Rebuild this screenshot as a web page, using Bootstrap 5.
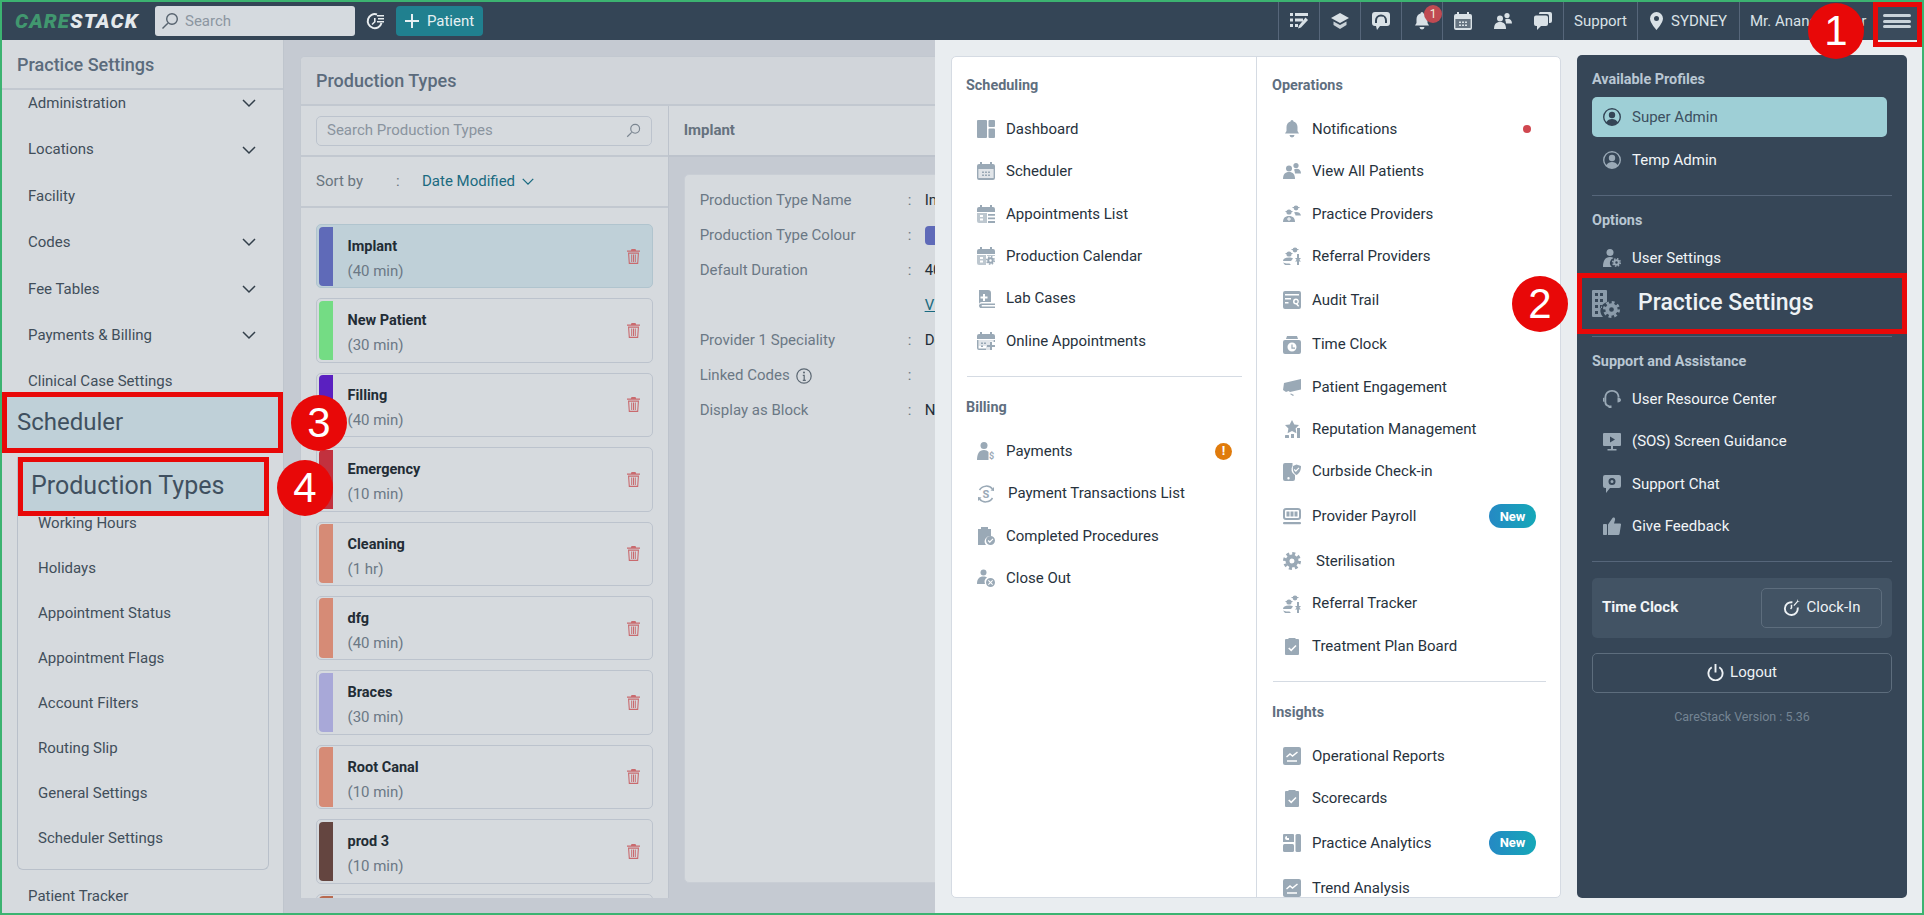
<!DOCTYPE html>
<html lang="en">
<head>
  <meta charset="UTF-8" />
  <meta name="viewport" content="width=device-width, initial-scale=1.0"/>
  <title>Practice Settings - Production Types</title>
  <link href="https://cdn.jsdelivr.net/npm/bootstrap@5.3.0/dist/css/bootstrap.min.css" rel="stylesheet"/>
  <style>
    body { margin: 0; font-family: Roboto, "Liberation Sans", sans-serif; overflow: hidden; background: #e9edf0; }
    svg { fill: currentColor; flex-shrink: 0; }
    #app { width: 1924px; height: 915px; border: 2px solid #3cb371; position: relative; overflow: hidden; background: #c5cad2; }

    /* top bar */
    .topbar { height: 38px; background: #344556; color: #d9e1e6; }
    .brand { width: 140px; margin-left: 13px; font-size: 20.5px; font-weight: 900; font-style: italic; letter-spacing: 1.1px; color: #e4e9ec; white-space: nowrap; }
    .brand b { color: #41976f; font-weight: 900; }
    .top-search { width: 200px; height: 30px; background: #d5dadf; border-radius: 3px; color: #8c96a1; font-size: 15px; padding-left: 6px; }
    .top-search svg { width: 18px; height: 18px; margin-right: 6px; color: #56626e; }
    .top-clock { width: 18px; height: 18px; margin: 0 12px 0 11px; color: #e8edf0; }
    .btn-patient { width: 87px; height: 30px; background: #20808f; color: #e6f0f2; border-radius: 4px; font-size: 15px; border: 0; padding: 0; }
    .top-cell { height: 38px; border-left: 1px solid #56667a; font-size: 15px; white-space: nowrap; }
    .top-ico { width: 41px; }
    .top-plain { width: 40.33px; }
    .top-ico svg, .top-plain svg { width: 18px; height: 18px; }
    .top-support { width: 74px; }
    .top-loc { width: 102px; }
    .top-loc svg { width: 13px; height: 18px; margin-right: 8px; }
    .top-name { width: 134px; padding-left: 10px; }
    .burger { width: 48px; height: 38px; margin-right: 1px; background: #3a4b5c; border: 0; padding: 0; }
    .burger i { display: block; width: 28px; height: 3px; margin: 2.5px auto; border-radius: 2px; background: #c9d3da; }
    .bell-count { position: absolute; top: 3px; left: 22px; width: 18px; height: 18px; border-radius: 50%; background: #c04a52; color: #eed; font-size: 12px; line-height: 18px; text-align: center; }

    /* left settings nav */
    .side { width: 282px; height: 873px; background: #d6dade; border-right: 1px solid #bfc5cd; overflow: hidden; }
    .side-title { height: 50px; padding-left: 15px; border-bottom: 2px solid #c2c8d0; font-size: 18px; font-weight: 500; color: #5b6b7c; }
    .side-scroll { margin-top: -10px; color: #414e5a; font-size: 15px; }
    .side-row { height: 46.4px; padding: 0 26px 0 26px; }
    .side-row svg { width: 16px; height: 10px; fill: none; stroke: #333f4a; stroke-width: 1.5; }
    .side-open { position: relative; margin-top: -13px; height: 61px; padding-left: 10px; border: 5px solid #e80808; background: #bfd0d8; font-size: 24px; color: #3f5060; }
    .side-sub { position: relative; margin: 4px 14px 0 15px; padding-bottom: 8px; border: 1px solid #b9c0ca; border-top: 0; border-radius: 0 0 6px 6px; }
    .sub-active { position: relative; z-index: 1; height: 59px; margin: 0 -1px 0 0; padding-left: 8px; border: 5px solid #e80808; background: #bfd0d8; font-size: 25px; color: #3f5060; }
    .sub-row { height: 45px; padding-left: 20px; }
    .sub-first { margin-top: -15px; padding-top: 0; }
    .side-last { margin-top: 3px; }

    /* production types card */
    .prod-card { position: relative; width: 1000px; margin: 16px 0 0 16px; height: 842px; background: #d6dade; border: 1px solid #c2c8d0; border-bottom: 0; border-radius: 5px 5px 0 0; overflow: hidden; }
    .prod-head { height: 49px; padding-left: 15px; background: #d1d5da; border-bottom: 2px solid #c2c8d0; font-size: 18px; font-weight: 500; color: #5b6b7c; }
    .prod-left { width: 368px; border-right: 1px solid #bdc3cc; }
    .prod-search { height: 51px; padding: 0 15px; border-bottom: 2px solid #c2c8d0; }
    .prod-input { height: 30px; width: 336px; border: 1px solid #bcc3cd; border-radius: 5px; padding: 0 10px; color: #8a949f; font-size: 15px; }
    .prod-input svg { width: 15px; height: 15px; color: #7a8590; }
    .prod-sort { height: 51px; padding-left: 15px; border-bottom: 2px solid #c2c8d0; color: #69757f; font-size: 15px; }
    .sort-colon { width: 26px; padding-left: 33px; margin-right: 26px; }
    .sort-val { color: #1a6a80; }
    .sort-val svg { width: 14px; height: 9px; margin-left: 6px; fill: none; stroke: #1a6a80; stroke-width: 1.5; }
    .type-list { padding: 16px 15px 0; }
    .type-item { height: 64.4px; margin-bottom: 10px; border: 1.5px solid #bcc3cd; border-radius: 5px; overflow: hidden; }
    .type-item.is-on { background: #bfd0d8; border-color: #b0c4ce; }
    .type-bar { width: 14px; margin: 1.5px 0 1.5px 1.5px; border-radius: 4px 0 0 4px; }
    .type-body { padding: 9px 0 0 15px; line-height: 25px; }
    .type-name { font-size: 14.5px; font-weight: 700; color: #222c35; }
    .type-time { font-size: 15px; color: #6b7885; }
    .type-trash { width: 13px; height: 15px; margin: 0 12px 0 auto; color: #c96a6e; }
    .bar-implant { background: #5f6ab8; }
    .bar-new { background: #74dc84; }
    .bar-fill { background: #5a20c0; }
    .bar-emerg { background: #c2313e; }
    .bar-salmon { background: #d68b76; }
    .bar-brace { background: #a8a8d8; }
    .bar-prod { background: #644540; }
    .bar-last { background: #b86a50; }
    .detail-pane { width: 631px; background: #c5cad2; }
    .detail-head { height: 51px; padding-left: 15px; background: #d6dade; border-bottom: 2px solid #bdc3cc; font-size: 15px; font-weight: 700; color: #66727e; }
    .detail-box { height: 709px; margin: 17px 0 0 15px; padding: 8px 15px; background: #d6dade; border-radius: 5px 0 0 5px; border: 1px solid #c9ced5; font-size: 15px; }
    .detail-row { height: 35px; }
    .detail-label { width: 208px; color: #6b7885; }
    .detail-colon { width: 17px; color: #6b7885; }
    .detail-val { color: #232e38; }
    .detail-val a { color: #1a6a80; }
    .info-ico { width: 16px; height: 16px; margin-left: 6px; color: #5c6873; }
    .swatch { width: 50px; height: 19px; border-radius: 4px; background: #5f6ab8; }

    /* slide-in menu */
    .drawer { position: absolute; top: 38px; left: 933px; right: 0; bottom: 0; padding: 16px 15px 15px 16px; gap: 16px; background: #e9edf0; z-index: 5; }
    .menu-white { width: 610px; height: 842px; background: #fff; border: 1px solid #d5dbe3; border-radius: 5px; overflow: hidden; color: #27323d; }
    .menu-col { width: 304px; padding: 19px 14px 0; }
    .menu-col + .menu-col { width: 304px; border-left: 1px solid #d5dbe3; padding-left: 15px; }
    .menu-title { height: 20px; line-height: 20px; font-size: 14.4px; font-weight: 700; color: #5f6f7f; }
    .menu-list { margin-top: 11.8px; }
    .menu-row { height: 42.4px; padding-left: 11px; font-size: 15px; white-space: nowrap; color: inherit; }
    .menu-row.is-tall { height: 47px; }
    .menu-row.is-mid { height: 46px; }
    .menu-ico { width: 18px; height: 18px; margin-right: 11px; color: #9aa9b6; }
    .menu-ico.nudge { margin-right: 13px; }
    .menu-rule { height: 1px; margin: 14px 0 21px; background: #d5dbe3; }
    .menu-white .menu-rule { margin-left: 1px; }
    .tag-new { width: 47px; height: 24px; margin-left: auto; margin-right: 10px; border-radius: 12px; background: linear-gradient(90deg, #2589c4, #15a8b8); color: #fff; font-size: 13px; font-weight: 700; }
    .dot-red { width: 8px; height: 8px; margin-left: auto; margin-right: 15px; border-radius: 50%; background: #d0474f; }
    .dot-warn { width: 17px; height: 17px; margin-left: auto; margin-right: 10px; border-radius: 50%; background: #e07b0c; color: #fff; font-size: 13px; font-weight: 700; }

    .menu-dark { width: 330px; height: 843px; margin-top: -1px; padding: 15px 15px 0; background: #364657; border-radius: 5px; color: #f2f5f7; overflow: hidden; }
    .menu-dark .menu-title { color: #b9c7d3; }
    .menu-dark .menu-rule { margin: 0; background: #56667a; }
    .profile-row { height: 40px; margin-top: 7px; padding-left: 11px; font-size: 15px; }
    .profile-row.is-on { width: 295px; background: #9ecfd6; border-radius: 5px; color: #3c4f60; }
    .profile-row.is-on .menu-ico { color: #344556; }
    .profile-temp { margin-top: 3px; }
    .rule-a { margin-top: 15px !important; }
    .title-gap { margin-top: 15px; }
    .opts-row { height: 40px; margin-top: 7px; padding-left: 11px; font-size: 15px; }
    .big-row { height: 61px; margin: -5px -15px 0; padding-left: 15px; border: 5px solid #e80808; background: #364657; font-size: 23px; font-weight: 500; color: #eef2f5; }
    .big-row svg { width: 28px; height: 28px; margin-right: 18px; margin-left: -5px; color: #8b9baa; }
    .rule-b { margin-top: 2px !important; }
    .support-list { margin-top: 6px; }
    .rule-c { margin-top: 13.5px !important; }
    .clock-box { height: 60px; margin-top: 15.5px; padding: 0 10px; background: #425364; border-radius: 5px; font-size: 15px; font-weight: 700; }
    .btn-clock, .btn-logout { height: 40px; padding: 0; background: transparent; border: 1px solid #5d6d7d; border-radius: 5px; color: #eef2f5; font-size: 15px; }
    .btn-clock { width: 121px; font-weight: 400; }
    .btn-clock svg { width: 17px; height: 17px; margin-right: 7px; }
    .btn-logout { width: 300px; margin-top: 15px; }
    .btn-logout svg { width: 17px; height: 17px; margin-right: 6px; }
    .version { margin-top: 16px; width: 300px; font-size: 12.5px; line-height: 16px; color: #748493; text-align: center; }

    /* numbered callouts pasted on the shot */
    .callout { position: absolute; z-index: 20; width: 56px; height: 56px; border-radius: 50%; background: #e80808; color: #fff; font-family: "Liberation Sans", sans-serif; font-size: 42px; line-height: 56px; text-align: center; }
    .callout-1 { left: 1806px; top: 1px; }
    .callout-2 { left: 1510px; top: 274px; }
    .callout-3 { left: 289px; top: 393px; }
    .callout-4 { left: 275px; top: 458px; }
    .burger-box { position: absolute; z-index: 19; left: 1871px; top: 0; width: 49px; height: 45px; border: 5px solid #e80808; }
  </style>
</head>
<body>
  <!-- icon set -->
  <svg width="0" height="0" class="position-absolute">
    <symbol id="i-gear" viewBox="0 0 18 18"><circle cx="9" cy="9" r="7.5" fill="none" stroke="currentColor" stroke-width="3" stroke-dasharray="3 2.89"/><path fill-rule="evenodd" d="M9 2.5a6.5 6.5 0 1 1 0 13 6.5 6.5 0 0 1 0-13zm0 4a2.5 2.5 0 1 0 0 5 2.5 2.5 0 0 0 0-5z"/></symbol>
    <symbol id="i-search" viewBox="0 0 18 18"><path fill-rule="evenodd" d="M11 1a6 6 0 1 1 0 12 6 6 0 0 1 0-12zm0 1.4a4.6 4.6 0 1 0 0 9.2 4.6 4.6 0 0 0 0-9.2z"/><path d="M6.3 10.7l1 1-5.3 5.3-1-1z"/></symbol>
    <symbol id="i-chev" viewBox="0 0 16 10"><path d="M2 2l6 6 6-6"/></symbol>
    <symbol id="i-trash" viewBox="0 0 13 15"><path fill-rule="evenodd" d="M4.5 0h4l.6 1.5H13v1.2H0V1.5h3.9zM1 3.6h11l-.8 11.4H1.800zm1.200 1.100l.6 9.100h7.400l.6-9.100z"/><path d="M4.200 5.500h1v7.500h-1zm1.800 0h1v7.500H6zm1.800 0h1v7.500h-1z"/></symbol>
    <symbol id="i-dash" viewBox="0 0 18 18"><rect width="10" height="18" rx="1"/><rect x="11.500" width="6.500" height="7" rx="1"/><rect x="11.500" y="8.500" width="6.500" height="9.500" rx="1"/></symbol>
    <symbol id="i-cal" viewBox="0 0 18 18"><path fill-rule="evenodd" d="M3 0h2v2h8V0h2v2h1a2 2 0 0 1 2 2v12a2 2 0 0 1-2 2H2a2 2 0 0 1-2-2V4a2 2 0 0 1 2-2h1zM1.500 7v9h15V7z"/><rect x="1.500" y="7" width="15" height="9" opacity=".3"/><path d="M5 9.500h2V11H5zm3 0h2V11H8zm3 0h2V11h-2zM5 12.500h2V14H5zm3 0h2V14H8zm3 0h2V14h-2z"/></symbol>
    <symbol id="i-callist" viewBox="0 0 18 18"><path fill-rule="evenodd" d="M3 0h2v2h8V0h2v2h1a2 2 0 0 1 2 2v3H0V4a2 2 0 0 1 2-2h1z"/><path d="M0 8h10v10H2a2 2 0 0 1-2-2z" opacity=".65"/><path d="M11 9h7v1.700h-7zm0 3.500h7v1.700h-7zm0 3.500h7V18h-7z"/><path fill="#fff" d="M3 10h3v2H3zm0 3.500h3v2H3z"/></symbol>
    <symbol id="i-calgear" viewBox="0 0 18 18"><path d="M3 0h2v2h8V0h2v2h1a2 2 0 0 1 2 2v3H0V4a2 2 0 0 1 2-2h1z"/><path d="M0 8h9v10H2a2 2 0 0 1-2-2z" opacity=".65"/><path d="M10 8h8v1h-8z" opacity=".65"/><path fill="#fff" d="M3 10h3v2H3zm0 3.500h3v2H3z"/><use href="#i-gear" x="9" y="9" width="9" height="9"/></symbol>
    <symbol id="i-calplus" viewBox="0 0 18 18"><path d="M3 0h2v2h8V0h2v2h1a2 2 0 0 1 2 2v3H0V4a2 2 0 0 1 2-2h1z"/><path d="M0 8h1.500v8.500H9V18H2a2 2 0 0 1-2-2zM16.500 8H18v2h-1.500z"/><path d="M1.500 8H16v1.500h-3V18H9v-4H1.500z" opacity=".3"/><path d="M13 10h2v3h3v2h-3v3h-2v-3h-3v-2h3z"/><path d="M4 10.500h2V12H4zm3 0h2V12H7zm-3 3h2V15H4z"/></symbol>
    <symbol id="i-lab" viewBox="0 0 18 18"><path fill-rule="evenodd" d="M2 0h9a3 3 0 0 1 3 3v9H5a3 3 0 0 0-3 3zm4 4v2.500H3.500v2H6V11h2V8.500h2.500v-2H8V4z"/><path d="M5 13.500h13V15H5a1 1 0 0 0 0 1.500h13V18H5a2.300 2.300 0 0 1-3-2.200A2.400 2.400 0 0 1 5 13.500z"/></symbol>
    <symbol id="i-pay" viewBox="0 0 18 18"><circle cx="7" cy="3.500" r="3.500"/><path d="M0 18c0-6 2-10 7-10 2 0 3.500.7 4.500 2v8z"/><text x="12" y="17" font-family="Roboto, sans-serif" font-size="9" font-weight="700">$</text></symbol>
    <symbol id="i-trans" viewBox="0 0 18 18"><path fill="none" stroke="currentColor" stroke-width="1.500" d="M2.500 5A8 8 0 0 1 15.500 4M15.500 13A8 8 0 0 1 2.500 14"/><path d="M13.500 5.500L17 6V2zM4.500 12.500L1 12v4z"/><text x="9" y="13" text-anchor="middle" font-family="Roboto, sans-serif" font-size="11" font-weight="700">S</text></symbol>
    <symbol id="i-proc" viewBox="0 0 18 18"><path fill-rule="evenodd" d="M1 2h3V0h7v2h3v7a5.500 5.500 0 0 0-5 9H1z"/><path fill-rule="evenodd" d="M13.500 9a4.500 4.500 0 1 1 0 9 4.500 4.500 0 0 1 0-9zm2.100 2.500l-2.800 2.800-1.300-1.200-.8.800 2.100 2 3.600-3.600z"/></symbol>
    <symbol id="i-close" viewBox="0 0 18 18"><circle cx="6.500" cy="3.500" r="3"/><path d="M0 15c0-5 2-7.500 6.500-7.500 1.500 0 2.500.3 3.500 1A5.500 5.500 0 0 0 8 15z"/><path fill-rule="evenodd" d="M13.500 9a4.500 4.500 0 1 1 0 9 4.500 4.500 0 0 1 0-9zm-1.800 2l-.7.700 1.800 1.800-1.800 1.800.7.700 1.800-1.800 1.800 1.800.7-.7-1.800-1.800 1.800-1.800-.7-.7-1.800 1.800z"/></symbol>
    <symbol id="i-bell" viewBox="0 0 18 18"><path d="M9 0a1.500 1.500 0 0 1 1.500 1.500C13 2.200 14.500 4.500 14.500 7v4l1.500 2.500H2L3.500 11V7c0-2.500 1.500-4.800 4-5.500A1.500 1.500 0 0 1 9 0z"/><path d="M6.500 15h5a2.500 2.500 0 0 1-5 0z"/></symbol>
    <symbol id="i-people" viewBox="0 0 18 18"><circle cx="13" cy="3.500" r="2.600"/><circle cx="6" cy="6.500" r="3"/><path d="M11 7.500c1-.7 1.500-.8 2.500-.8 2.800 0 4.500 1.800 4.500 4.800h-6c-.2-1.500-.4-2.900-1-4z"/><path d="M0 17c0-4.500 2-7 6-7s6 2.500 6 7z"/></symbol>
    <symbol id="i-prov" viewBox="0 0 18 18"><circle cx="13" cy="3" r="2.400"/><path d="M9.500 2h7v1h-7z"/><circle cx="6" cy="7" r="2.600"/><path d="M2.500 6h7v1h-7z"/><path d="M13 7c2.500 0 4.500 1 5 3.500h-5.500c0-1-.5-2-1.500-3 .4-.3 1.200-.5 2-.5z"/><path fill-rule="evenodd" d="M0 17c0-3.800 2-6 6-6s6 2.200 6 6zm4-3.500v1h1.500V16h1v-1.500H8v-1H6.500V12h-1v1.500z"/></symbol>
    <symbol id="i-refer" viewBox="0 0 18 18"><circle cx="12" cy="3" r="2.400"/><path d="M8.500 2h7v1h-7z"/><circle cx="6" cy="7" r="2.600"/><path d="M2.500 6h7v1h-7z"/><path d="M0 14c0-2 2-3.500 6-3.500 1.500 0 3 .3 4 1l-2 2.500zM0 15.500c2 1 4.500 1 6.500 1L8 18H2z"/><path d="M14 7h2v4h2l-3 3.500-3-3.500h2zM15 11.500l3 3h-2v3.500h-2v-3.500h-2z"/></symbol>
    <symbol id="i-audit" viewBox="0 0 18 18"><path fill-rule="evenodd" d="M2 0h14a2 2 0 0 1 2 2v14a2 2 0 0 1-2 2H2a2 2 0 0 1-2-2V2a2 2 0 0 1 2-2zm0 3v1.500h14V3zm0 4v1.500h6V7zm0 4v1.500h3.500V11zm11-3.500a3 3 0 1 0 0 6l2.200 2.300 1-1-1.500-1.900A3 3 0 0 0 13 7.500zm0 1.500a1.500 1.500 0 1 1 0 3 1.500 1.500 0 0 1 0-3z"/></symbol>
    <symbol id="i-tclock" viewBox="0 0 18 18"><path d="M4 0h10l1 3H3z"/><path fill-rule="evenodd" d="M2 4h14a2 2 0 0 1 2 2v10a2 2 0 0 1-2 2H2a2 2 0 0 1-2-2V6a2 2 0 0 1 2-2zm7 2.500a4.500 4.500 0 1 0 0 9 4.500 4.500 0 0 0 0-9zm-.6 2h1.200v3h2.400v1.200H8.400z"/></symbol>
    <symbol id="i-mega" viewBox="0 0 18 18"><path d="M18 1v10.500L7 14l-1.500-1L3 14l-3-2 1-7zM8 15.500l3 1.500-1 1-3-2z"/></symbol>
    <symbol id="i-rep" viewBox="0 0 18 18"><path d="M9 0l2.300 4.400 4.700.7-3.400 3.300.8 4.800L9 11l-4.400 2.200.8-4.800L2 5.100l4.700-.7z"/><rect x="2" y="15" width="4" height="3" rx=".6"/><rect x="8" y="14" width="3" height="4"/><rect x="14" y="8" width="3" height="10"/></symbol>
    <symbol id="i-curb" viewBox="0 0 18 18"><path fill-rule="evenodd" d="M2 0h7.500v3A6 6 0 0 0 12 12v4a2 2 0 0 1-2 2H2a2 2 0 0 1-2-2V2a2 2 0 0 1 2-2zm3.500 14a1.200 1.200 0 1 0 0 2.400 1.200 1.200 0 0 0 0-2.400z"/><path fill-rule="evenodd" d="M13.500 1.500L18 3c0 4-1 7-4.500 9C10 10 9.500 7 10 3zm2.100 3l-2.800 2.800-1.200-1.200-.8.800 2 2 3.600-3.600z"/></symbol>
    <symbol id="i-payroll" viewBox="0 0 18 18"><path fill-rule="evenodd" d="M3 1h12a3 3 0 0 1 3 3v6a3 3 0 0 1-3 3H3a3 3 0 0 1-3-3V4a3 3 0 0 1 3-3zm0 2a1 1 0 0 0-1 1v6a1 1 0 0 0 1 1h12a1 1 0 0 0 1-1V4a1 1 0 0 0-1-1z"/><rect x="3.500" y="4.500" width="3" height="5"/><rect x="7.500" y="4.500" width="3" height="5"/><rect x="11.500" y="4.500" width="3" height="5"/><rect y="15" width="18" height="2.200" rx="1"/></symbol>
    <symbol id="i-clip" viewBox="0 0 18 18"><path fill-rule="evenodd" d="M3 2h2.500V1h7v1H15a1 1 0 0 1 1 1v14a1 1 0 0 1-1 1H3a1 1 0 0 1-1-1V3a1 1 0 0 1 1-1zm9.500 6l-4.300 4.300-2-1.900-1 1 3 3 5.300-5.300z"/></symbol>
    <symbol id="i-chart" viewBox="0 0 18 18"><rect width="18" height="18" rx="2"/><path fill="none" stroke="#fff" stroke-width="1.500" d="M3.500 10l3.500-3 2.500 2 5-4M4 14h10"/></symbol>
    <symbol id="i-analytics" viewBox="0 0 18 18"><path fill-rule="evenodd" d="M1 0h9a1 1 0 0 1 1 1v7H0V1a1 1 0 0 1 1-1zm3 2a2 2 0 0 0 0 4h2V4H4z"/><rect y="10" width="11" height="8" rx="1.500"/><rect x="12.500" width="5.500" height="18" rx="1.500"/></symbol>
    <symbol id="i-profile" viewBox="0 0 18 18"><path fill-rule="evenodd" d="M9 0a9 9 0 1 1 0 18A9 9 0 0 1 9 0zm0 1.500a7.500 7.500 0 0 0-5.500 12.600C4.500 12 6.500 11 9 11s4.500 1 5.500 3.100A7.500 7.500 0 0 0 9 1.500z"/><circle cx="9" cy="7" r="3.200"/></symbol>
    <symbol id="i-usergear" viewBox="0 0 18 18"><circle cx="7" cy="3.500" r="3.500"/><path d="M0 18c0-6 2-10 7-10 1.500 0 2.700.4 3.600 1.100A5 5 0 0 0 9 18z"/><use href="#i-gear" x="9" y="9" width="9" height="9"/></symbol>
    <symbol id="i-build" viewBox="0 0 28 28"><path fill-rule="evenodd" d="M1 0h13a1 1 0 0 1 1 1v11a9 9 0 0 0-4 15H1a1 1 0 0 1-1-1V1a1 1 0 0 1 1-1zm2 3v3h3V3zm5 0v3h3V3zM3 9v3h3V9zm5 0v3h3V9zM3 15v3h3v-3zm5 0v3h2v-3zM3 21v3h3v-3z"/><use href="#i-gear" x="11" y="11" width="17" height="17"/></symbol>
    <symbol id="i-head" viewBox="0 0 18 18"><path d="M9 0c4.400 0 7.500 3 7.500 7.500h-1.800C14.700 4 12.400 1.800 9 1.800S3.300 4 3.300 7.500V12c0 1.500.9 2.800 2.700 3.200v1.800c-3.500-.4-4.500-2.700-4.500-5V7.500C1.500 3 4.600 0 9 0z"/><path d="M0 8l1.500-.5V12L0 11.500zM14.500 7.500c2 0 3.500 1 3.500 2.500s-1.500 2.500-3.500 2.500zM5.500 15.500h3V18h-3z"/></symbol>
    <symbol id="i-screen" viewBox="0 0 18 18"><path fill-rule="evenodd" d="M1 0h16a1 1 0 0 1 1 1v11a1 1 0 0 1-1 1H1a1 1 0 0 1-1-1V1a1 1 0 0 1 1-1zm6 3.500v6l5-3z"/><path d="M8 13h2v3H8zM4.500 16h9v1.500h-9z"/></symbol>
    <symbol id="i-schat" viewBox="0 0 18 18"><path fill-rule="evenodd" d="M2 0h14a2 2 0 0 1 2 2v9a2 2 0 0 1-2 2H7l-4 5v-5H2a2 2 0 0 1-2-2V2a2 2 0 0 1 2-2zm7 3a3.500 3.500 0 1 0 0 7 3.500 3.500 0 0 0 0-7zm0 2a1.500 1.500 0 1 1 0 3 1.500 1.500 0 0 1 0-3z"/></symbol>
    <symbol id="i-thumb" viewBox="0 0 18 18"><rect y="7" width="4" height="11" rx=".8"/><path d="M5 7.500L9.500 1c1.500-1 3 0 2.500 2L11 6.500h6a1 1 0 0 1 1 1.200L16.500 17a1.300 1.300 0 0 1-1.300 1H5z"/></symbol>
    <symbol id="i-clockin" viewBox="0 0 18 18"><path fill="none" stroke="currentColor" stroke-width="2" d="M10 3.500A6.800 6.800 0 1 0 15.500 9"/><path d="M8.200 6h1.600v3.500L8.500 11l-1-1 .7-.9z"/><path d="M11 6.500L15 2l.5-2 .5 2 2 .5-2 .5-4 4.500z"/></symbol>
    <symbol id="i-power" viewBox="0 0 18 18"><path d="M8 0h2v9H8z"/><path fill="none" stroke="currentColor" stroke-width="2" d="M5 3.500a7.500 7.500 0 1 0 8 0"/></symbol>
    <symbol id="i-info" viewBox="0 0 16 16"><circle cx="8" cy="8" r="7.200" fill="none" stroke="currentColor" stroke-width="1.200"/><circle cx="8" cy="4.600" r="1"/><path d="M6.800 6.800h2v5h1V13H6.800v-1.200h.8V8H6.800z"/></symbol>
    <symbol id="i-tasks" viewBox="0 0 18 18"><path d="M0 1h3v3H0zm5 0h13v3H5zM0 6.500h3v3H0zm5 0h8v3H5zM0 12h3v3H0zm5 0h3v3H5z"/><path d="M15.500 5.500L18 8l-7 7.500-3 1 1-3z"/></symbol>
    <symbol id="i-cap" viewBox="0 0 18 18"><path d="M9 1l9 5-9 5-9-5z"/><path d="M2.500 9.500L9 13l6.500-3.500V13L9 17l-6.500-4z" opacity=".9"/></symbol>
    <symbol id="i-speed" viewBox="0 0 18 18"><path fill-rule="evenodd" d="M3 0h12a3 3 0 0 1 3 3v8a3 3 0 0 1-3 3H8l-3 4-1-4H3a3 3 0 0 1-3-3V3a3 3 0 0 1 3-3zm6 2.500a6 6 0 0 0-6 6v2.500h2V8.500a4 4 0 0 1 8 0V11h2V8.500a6 6 0 0 0-6-6z"/><path d="M11 4.500l1 .7-2.500 5h-1.500z"/></symbol>
    <symbol id="i-chats" viewBox="0 0 18 18"><path d="M6 0h10a2 2 0 0 1 2 2v7a2 2 0 0 1-2 2h-1V4a2 2 0 0 0-2-2H5a2 2 0 0 1 1-2z"/><path d="M2 3.500h10a2 2 0 0 1 2 2V12a2 2 0 0 1-2 2H7l-4 4v-4H2a2 2 0 0 1-2-2V5.500a2 2 0 0 1 2-2z"/></symbol>
    <symbol id="i-pin" viewBox="0 0 13 18"><path fill-rule="evenodd" d="M6.500 0A6.500 6.500 0 0 1 13 6.500C13 11 6.500 18 6.500 18S0 11 0 6.500A6.500 6.500 0 0 1 6.500 0zm0 4a2.500 2.500 0 1 0 0 5 2.500 2.500 0 0 0 0-5z"/></symbol>
    <symbol id="i-tclk" viewBox="0 0 18 18"><path fill="none" stroke="currentColor" stroke-width="2" d="M11 2.500A7 7 0 1 0 15.500 11"/><path d="M8 6h1.600v4L6.500 13l-1-1L8 9.500zM11 3h7v1.500h-7zm1 3h6v1.500h-6zm-1 3h7v1.500h-7z"/></symbol>
  </svg>

  <div id="app">
    <!-- Top bar -->
    <header class="topbar d-flex align-items-center">
      <div class="brand"><b>CARE</b>STACK</div>
      <div class="top-search d-flex align-items-center"><svg><use href="#i-search"/></svg>Search</div>
      <svg class="top-clock"><use href="#i-tclk"/></svg>
      <button class="btn-patient d-flex align-items-center justify-content-center gap-2" type="button">
        <svg width="14" height="14" viewBox="0 0 14 14"><path d="M6 0h2v6h6v2H8v6H6V8H0V6h6z"/></svg>Patient
      </button>
      <div class="ms-auto d-flex align-items-center">
        <div class="top-cell top-ico d-flex align-items-center justify-content-center"><svg><use href="#i-tasks"/></svg></div>
        <div class="top-cell top-ico d-flex align-items-center justify-content-center"><svg><use href="#i-cap"/></svg></div>
        <div class="top-cell top-ico d-flex align-items-center justify-content-center"><svg><use href="#i-speed"/></svg></div>
        <div class="top-cell top-ico position-relative d-flex align-items-center justify-content-center"><svg><use href="#i-bell"/></svg><span class="bell-count">1</span></div>
        <div class="top-cell top-plain d-flex align-items-center justify-content-center"><svg><use href="#i-cal"/></svg></div>
        <div class="top-plain d-flex align-items-center justify-content-center"><svg><use href="#i-people"/></svg></div>
        <div class="top-plain d-flex align-items-center justify-content-center"><svg><use href="#i-chats"/></svg></div>
        <div class="top-cell top-support d-flex align-items-center justify-content-center">Support</div>
        <div class="top-cell top-loc d-flex align-items-center justify-content-center"><svg><use href="#i-pin"/></svg>SYDNEY</div>
        <div class="top-cell top-name d-flex align-items-center">Mr. Anand Doctor</div>
        <button class="burger" type="button"><i></i><i></i><i></i></button>
      </div>
    </header>

    <div class="d-flex">
      <!-- Practice settings nav -->
      <aside class="side">
        <div class="side-title d-flex align-items-center">Practice Settings</div>
        <div class="side-scroll">
          <div class="side-row d-flex align-items-center justify-content-between">Administration <svg><use href="#i-chev"/></svg></div>
          <div class="side-row d-flex align-items-center justify-content-between">Locations <svg><use href="#i-chev"/></svg></div>
          <div class="side-row d-flex align-items-center">Facility</div>
          <div class="side-row d-flex align-items-center justify-content-between">Codes <svg><use href="#i-chev"/></svg></div>
          <div class="side-row d-flex align-items-center justify-content-between">Fee Tables <svg><use href="#i-chev"/></svg></div>
          <div class="side-row d-flex align-items-center justify-content-between">Payments &amp; Billing <svg><use href="#i-chev"/></svg></div>
          <div class="side-row d-flex align-items-center">Clinical Case Settings</div>
          <div class="side-open d-flex align-items-center">Scheduler</div>
          <div class="side-sub">
            <div class="sub-active d-flex align-items-center">Production Types</div>
            <div class="sub-row sub-first d-flex align-items-center">Working Hours</div>
            <div class="sub-row d-flex align-items-center">Holidays</div>
            <div class="sub-row d-flex align-items-center">Appointment Status</div>
            <div class="sub-row d-flex align-items-center">Appointment Flags</div>
            <div class="sub-row d-flex align-items-center">Account Filters</div>
            <div class="sub-row d-flex align-items-center">Routing Slip</div>
            <div class="sub-row d-flex align-items-center">General Settings</div>
            <div class="sub-row d-flex align-items-center">Scheduler Settings</div>
          </div>
          <div class="side-row side-last d-flex align-items-center">Patient Tracker</div>
        </div>
      </aside>

      <!-- Production types -->
      <main class="prod-card">
        <div class="prod-head d-flex align-items-center">Production Types</div>
        <div class="d-flex">
          <div class="prod-left">
            <div class="prod-search d-flex align-items-center">
              <div class="prod-input d-flex align-items-center justify-content-between">Search Production Types <svg><use href="#i-search"/></svg></div>
            </div>
            <div class="prod-sort d-flex align-items-center">Sort by <span class="sort-colon">:</span>
              <span class="sort-val d-flex align-items-center">Date Modified <svg><use href="#i-chev"/></svg></span>
            </div>
            <div class="type-list">
              <div class="type-item is-on d-flex"><div class="type-bar bar-implant"></div><div class="type-body"><div class="type-name">Implant</div><div class="type-time">(40 min)</div></div><svg class="type-trash align-self-center"><use href="#i-trash"/></svg></div>
              <div class="type-item d-flex"><div class="type-bar bar-new"></div><div class="type-body"><div class="type-name">New Patient</div><div class="type-time">(30 min)</div></div><svg class="type-trash align-self-center"><use href="#i-trash"/></svg></div>
              <div class="type-item d-flex"><div class="type-bar bar-fill"></div><div class="type-body"><div class="type-name">Filling</div><div class="type-time">(40 min)</div></div><svg class="type-trash align-self-center"><use href="#i-trash"/></svg></div>
              <div class="type-item d-flex"><div class="type-bar bar-emerg"></div><div class="type-body"><div class="type-name">Emergency</div><div class="type-time">(10 min)</div></div><svg class="type-trash align-self-center"><use href="#i-trash"/></svg></div>
              <div class="type-item d-flex"><div class="type-bar bar-salmon"></div><div class="type-body"><div class="type-name">Cleaning</div><div class="type-time">(1 hr)</div></div><svg class="type-trash align-self-center"><use href="#i-trash"/></svg></div>
              <div class="type-item d-flex"><div class="type-bar bar-salmon"></div><div class="type-body"><div class="type-name">dfg</div><div class="type-time">(40 min)</div></div><svg class="type-trash align-self-center"><use href="#i-trash"/></svg></div>
              <div class="type-item d-flex"><div class="type-bar bar-brace"></div><div class="type-body"><div class="type-name">Braces</div><div class="type-time">(30 min)</div></div><svg class="type-trash align-self-center"><use href="#i-trash"/></svg></div>
              <div class="type-item d-flex"><div class="type-bar bar-salmon"></div><div class="type-body"><div class="type-name">Root Canal</div><div class="type-time">(10 min)</div></div><svg class="type-trash align-self-center"><use href="#i-trash"/></svg></div>
              <div class="type-item d-flex"><div class="type-bar bar-prod"></div><div class="type-body"><div class="type-name">prod 3</div><div class="type-time">(10 min)</div></div><svg class="type-trash align-self-center"><use href="#i-trash"/></svg></div>
              <div class="type-item d-flex"><div class="type-bar bar-last"></div></div>
            </div>
          </div>
          <div class="detail-pane">
            <div class="detail-head d-flex align-items-center">Implant</div>
            <div class="detail-box">
              <div class="detail-row d-flex align-items-center"><div class="detail-label">Production Type Name</div><div class="detail-colon">:</div><div class="detail-val">Implant</div></div>
              <div class="detail-row d-flex align-items-center"><div class="detail-label">Production Type Colour</div><div class="detail-colon">:</div><div class="swatch"></div></div>
              <div class="detail-row d-flex align-items-center"><div class="detail-label">Default Duration</div><div class="detail-colon">:</div><div class="detail-val">40 min</div></div>
              <div class="detail-row d-flex align-items-center"><div class="detail-label"></div><div class="detail-colon"></div><div class="detail-val"><a href="#">View</a></div></div>
              <div class="detail-row d-flex align-items-center"><div class="detail-label">Provider 1 Speciality</div><div class="detail-colon">:</div><div class="detail-val">Dentist</div></div>
              <div class="detail-row d-flex align-items-center"><div class="detail-label d-flex align-items-center">Linked Codes <svg class="info-ico"><use href="#i-info"/></svg></div><div class="detail-colon">:</div></div>
              <div class="detail-row d-flex align-items-center"><div class="detail-label">Display as Block</div><div class="detail-colon">:</div><div class="detail-val">No</div></div>
            </div>
          </div>
        </div>
      </main>
    </div>

    <!-- Slide-in main menu -->
    <div class="drawer d-flex">
      <div class="menu-white d-flex">
        <div class="menu-col">
          <div class="menu-title">Scheduling</div>
          <div class="menu-list">
            <div class="menu-row d-flex align-items-center"><svg class="menu-ico"><use href="#i-dash"/></svg>Dashboard</div>
            <div class="menu-row d-flex align-items-center"><svg class="menu-ico"><use href="#i-cal"/></svg>Scheduler</div>
            <div class="menu-row d-flex align-items-center"><svg class="menu-ico"><use href="#i-callist"/></svg>Appointments List</div>
            <div class="menu-row d-flex align-items-center"><svg class="menu-ico"><use href="#i-calgear"/></svg>Production Calendar</div>
            <div class="menu-row d-flex align-items-center"><svg class="menu-ico"><use href="#i-lab"/></svg>Lab Cases</div>
            <div class="menu-row d-flex align-items-center"><svg class="menu-ico"><use href="#i-calplus"/></svg>Online Appointments</div>
          </div>
          <div class="menu-rule"></div>
          <div class="menu-title">Billing</div>
          <div class="menu-list">
            <div class="menu-row d-flex align-items-center"><svg class="menu-ico"><use href="#i-pay"/></svg>Payments<span class="dot-warn d-flex align-items-center justify-content-center">!</span></div>
            <div class="menu-row d-flex align-items-center"><svg class="menu-ico nudge"><use href="#i-trans"/></svg>Payment Transactions List</div>
            <div class="menu-row d-flex align-items-center"><svg class="menu-ico"><use href="#i-proc"/></svg>Completed Procedures</div>
            <div class="menu-row d-flex align-items-center"><svg class="menu-ico"><use href="#i-close"/></svg>Close Out</div>
          </div>
        </div>
        <div class="menu-col">
          <div class="menu-title">Operations</div>
          <div class="menu-list">
            <div class="menu-row d-flex align-items-center"><svg class="menu-ico"><use href="#i-bell"/></svg>Notifications<span class="dot-red"></span></div>
            <div class="menu-row d-flex align-items-center"><svg class="menu-ico"><use href="#i-people"/></svg>View All Patients</div>
            <div class="menu-row d-flex align-items-center"><svg class="menu-ico"><use href="#i-prov"/></svg>Practice Providers</div>
            <div class="menu-row d-flex align-items-center"><svg class="menu-ico"><use href="#i-refer"/></svg>Referral Providers</div>
            <div class="menu-row is-mid d-flex align-items-center"><svg class="menu-ico"><use href="#i-audit"/></svg>Audit Trail</div>
            <div class="menu-row d-flex align-items-center"><svg class="menu-ico"><use href="#i-tclock"/></svg>Time Clock</div>
            <div class="menu-row d-flex align-items-center"><svg class="menu-ico"><use href="#i-mega"/></svg>Patient Engagement</div>
            <div class="menu-row d-flex align-items-center"><svg class="menu-ico"><use href="#i-rep"/></svg>Reputation Management</div>
            <div class="menu-row d-flex align-items-center"><svg class="menu-ico"><use href="#i-curb"/></svg>Curbside Check-in</div>
            <div class="menu-row is-tall d-flex align-items-center"><svg class="menu-ico"><use href="#i-payroll"/></svg>Provider Payroll<span class="tag-new d-flex align-items-center justify-content-center">New</span></div>
            <div class="menu-row d-flex align-items-center"><svg class="menu-ico"><use href="#i-gear"/></svg><span class="ps-1">Sterilisation</span></div>
            <div class="menu-row d-flex align-items-center"><svg class="menu-ico"><use href="#i-refer"/></svg>Referral Tracker</div>
            <div class="menu-row d-flex align-items-center"><svg class="menu-ico"><use href="#i-clip"/></svg>Treatment Plan Board</div>
          </div>
          <div class="menu-rule"></div>
          <div class="menu-title">Insights</div>
          <div class="menu-list">
            <div class="menu-row d-flex align-items-center"><svg class="menu-ico"><use href="#i-chart"/></svg>Operational Reports</div>
            <div class="menu-row d-flex align-items-center"><svg class="menu-ico"><use href="#i-clip"/></svg>Scorecards</div>
            <div class="menu-row is-tall d-flex align-items-center"><svg class="menu-ico"><use href="#i-analytics"/></svg>Practice Analytics<span class="tag-new d-flex align-items-center justify-content-center">New</span></div>
            <div class="menu-row d-flex align-items-center"><svg class="menu-ico"><use href="#i-chart"/></svg>Trend Analysis</div>
          </div>
        </div>
      </div>

      <div class="menu-dark">
        <div class="menu-title">Available Profiles</div>
        <div class="profile-row is-on d-flex align-items-center"><svg class="menu-ico"><use href="#i-profile"/></svg>Super Admin</div>
        <div class="profile-row profile-temp d-flex align-items-center"><svg class="menu-ico"><use href="#i-profile"/></svg>Temp Admin</div>
        <div class="menu-rule rule-a"></div>
        <div class="menu-title title-gap">Options</div>
        <div class="opts-row d-flex align-items-center"><svg class="menu-ico"><use href="#i-usergear"/></svg>User Settings</div>
        <div class="big-row d-flex align-items-center"><svg><use href="#i-build"/></svg>Practice Settings</div>
        <div class="menu-rule rule-b"></div>
        <div class="menu-title title-gap">Support and Assistance</div>
        <div class="support-list">
          <div class="menu-row d-flex align-items-center"><svg class="menu-ico"><use href="#i-head"/></svg>User Resource Center</div>
          <div class="menu-row d-flex align-items-center"><svg class="menu-ico"><use href="#i-screen"/></svg>(SOS) Screen Guidance</div>
          <div class="menu-row d-flex align-items-center"><svg class="menu-ico"><use href="#i-schat"/></svg>Support Chat</div>
          <div class="menu-row d-flex align-items-center"><svg class="menu-ico"><use href="#i-thumb"/></svg>Give Feedback</div>
        </div>
        <div class="menu-rule rule-c"></div>
        <div class="clock-box d-flex align-items-center justify-content-between">Time Clock
          <button class="btn-clock d-flex align-items-center justify-content-center" type="button"><svg><use href="#i-clockin"/></svg>Clock-In</button>
        </div>
        <button class="btn-logout d-flex align-items-center justify-content-center" type="button"><svg><use href="#i-power"/></svg>Logout</button>
        <div class="version">CareStack Version : 5.36</div>
      </div>
    </div>

    <!-- callouts -->
    <div class="burger-box"></div>
    <div class="callout callout-1">1</div>
    <div class="callout callout-2">2</div>
    <div class="callout callout-3">3</div>
    <div class="callout callout-4">4</div>
  </div>

  <script src="https://cdn.jsdelivr.net/npm/bootstrap@5.3.0/dist/js/bootstrap.bundle.min.js"></script>
</body>
</html>
